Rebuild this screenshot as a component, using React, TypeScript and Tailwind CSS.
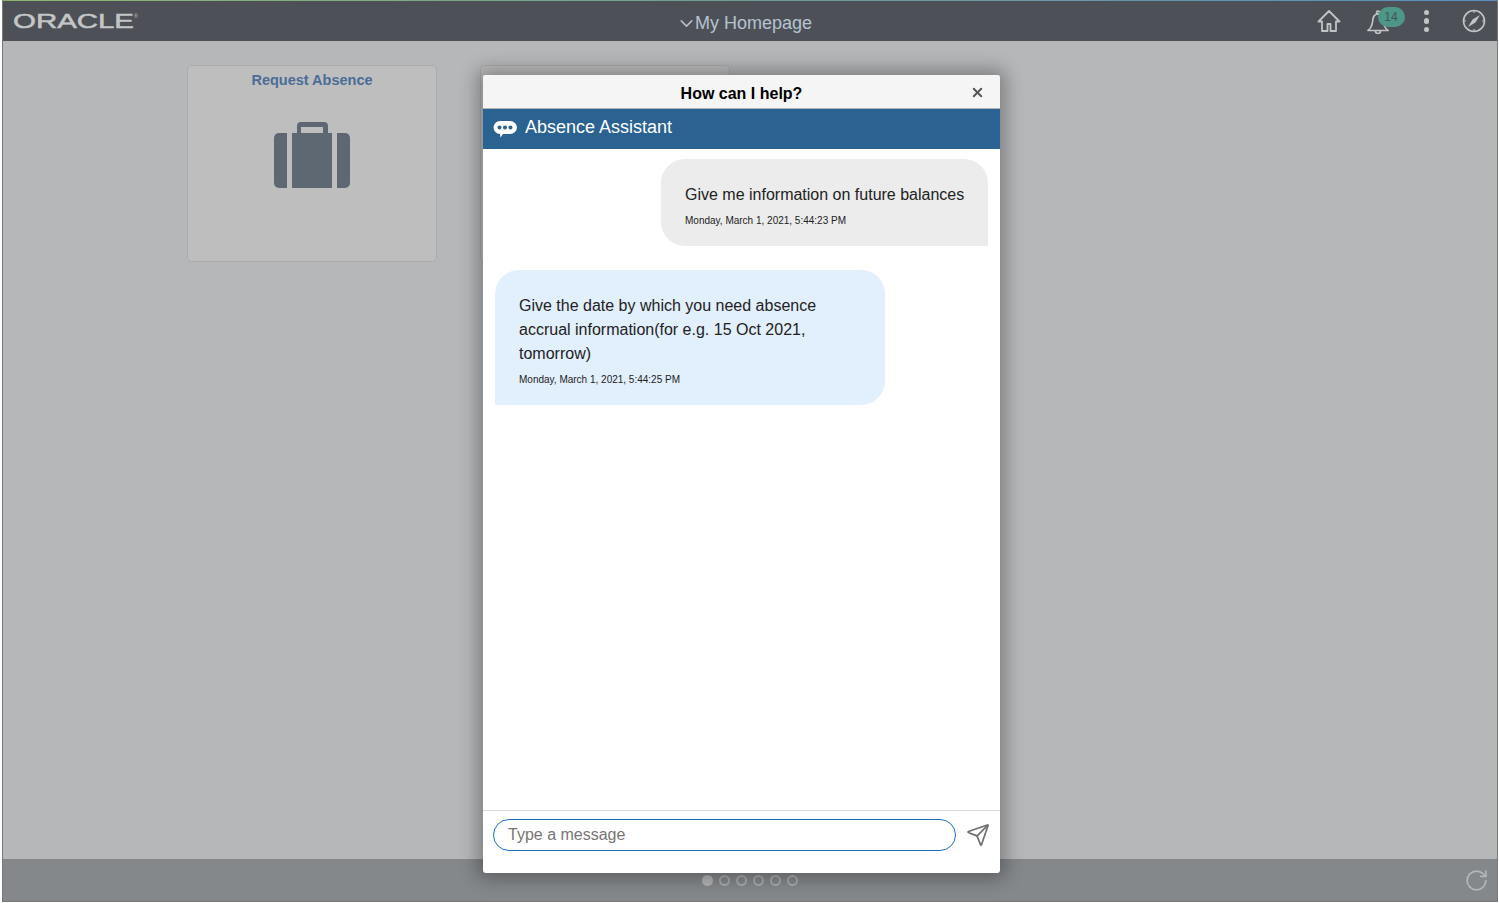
import { ChevronDown, X, Send, RotateCw } from 'lucide-react';

const FONT = "font-['Liberation_Sans',Arial,sans-serif]";

function Tile({ title }: { title?: string }) {
  return (
    <div className="w-[250px] h-[197px] shrink-0 rounded-[5px] border border-[#a9abae] bg-[#bebebe] flex flex-col items-center">
      {title && (
        <>
          <div className="mt-[4px] text-[14.5px] leading-[20px] font-bold text-[#4a6d98]">{title}</div>
          <svg width="76" height="66" viewBox="0 0 76 66" className="mt-[32px]">
            <path d="M23 11V4a4 4 0 0 1 4-4h23a4 4 0 0 1 4 4v7h-5V5H27v6z" fill="#5e6872" />
            <path d="M5 11h8v55H5a5 5 0 0 1-5-5V16a5 5 0 0 1 5-5z" fill="#5e6872" />
            <rect x="18" y="11" width="40" height="55" fill="#5e6872" />
            <path d="M63 11h8a5 5 0 0 1 5 5v45a5 5 0 0 1-5 5h-8z" fill="#5e6872" />
          </svg>
        </>
      )}
    </div>
  );
}

function HomeIcon() {
  return (
    <svg width="24" height="24" viewBox="0 0 24 24" fill="none" stroke="#c2c3c4" strokeWidth="1.8" strokeLinejoin="round">
      <path d="M12 2 1.500 12.500H5V22h5.500v-7h3v7H19v-9.500h3.500z" />
    </svg>
  );
}

function BellIcon() {
  return (
    <svg width="22" height="24" viewBox="0 0 22 24" fill="none" stroke="#c2c3c4" strokeWidth="1.7">
      <circle cx="11" cy="2.500" r="1.500" />
      <path d="M11 4C6.500 4 6 8 5.500 12 5 16 3.500 18.500 1 20.500h20c-2.500-2-4-4.500-4.500-8.500S15.500 4 11 4z" strokeLinejoin="round" />
      <path d="M8.500 21a2.500 2.500 0 0 0 5 0" />
    </svg>
  );
}

function CompassIcon() {
  return (
    <svg width="24" height="24" viewBox="0 0 24 24" fill="none" stroke="#c2c3c4" strokeWidth="1.6">
      <circle cx="12" cy="12" r="10.500" />
      <path d="M12 1.500v2.500M12 20v2.500M1.500 12H4M20 12h2.500" strokeWidth="1.200" />
      <path d="M18 6 13.500 13.500 6 18 10.500 10.500z" fill="#c2c3c4" stroke="none" />
    </svg>
  );
}

function Bubble({ text, time, side }: { text: string[]; time: string; side: 'me' | 'bot' }) {
  const me = side === 'me';
  return (
    <div
      className={
        me
          ? 'self-end w-[327px] h-[87px] mr-[12px] pl-[24px] pt-[24px] bg-[#ececec] rounded-tl-[24px] rounded-tr-[24px] rounded-bl-[24px]'
          : 'self-start w-[390px] h-[135px] ml-[12px] mt-[24px] pl-[24px] pt-[24px] bg-[#e2effd] rounded-tl-[24px] rounded-tr-[24px] rounded-br-[24px]'
      }
    >
      <div className="text-[16px] leading-[24px] text-[#222]">
        {text.map((t) => (
          <div key={t}>{t}</div>
        ))}
      </div>
      <div className="mt-[7px] text-[10px] leading-[14px] text-[#222]">{time}</div>
    </div>
  );
}

export default function App() {
  return (
    <div className={`relative h-[903px] w-[1499px] overflow-hidden bg-white pl-[2px] pr-px ${FONT}`}>
      <div className="h-[902px] flex flex-col border-l border-r border-b border-[#77797b]">
        {/* top bar */}
        <div className="h-px bg-gradient-to-r from-[#8db56f] via-[#6f9d94] to-[#5b8fc0]" />
        <header className="h-[40px] shrink-0 bg-[#4d5157] flex items-center relative">
          <svg width="130" height="24" viewBox="0 0 130 24" className="ml-[9px] mt-[2px]">
            <text
              x="1"
              y="18"
              textLength="121"
              lengthAdjust="spacingAndGlyphs"
              fontFamily="'Liberation Sans', Arial, sans-serif"
              fontSize="21"
              fill="#c4c5c6"
              stroke="#c4c5c6"
              strokeWidth="0.5"
            >
              ORACLE
            </text>
            <text x="122" y="8" fontFamily="'Liberation Sans', Arial, sans-serif" fontSize="5" fill="#c4c5c6">
              ®
            </text>
          </svg>
          <div className="absolute left-[673px] top-[9px] flex items-center">
            <ChevronDown size={21} strokeWidth={1.8} className="text-[#b9bcc0]" />
            <span className="ml-[-2px] text-[18px] leading-[26px] text-[#b5c3d1]">My Homepage</span>
          </div>
          <div className="ml-auto flex items-center">
            <HomeIcon />
            <div className="relative ml-[26px] mt-[1px]">
              <BellIcon />
              <span className="absolute left-[11px] top-[-3px] h-[20px] w-[27px] rounded-full bg-[#4e9685] text-center text-[12px] leading-[20px] text-[#3f5560]">
                14
              </span>
            </div>
            <div className="ml-[35px] flex flex-col gap-[3px]">
              <span className="size-[5.500px] rounded-full bg-[#c2c3c4]" />
              <span className="size-[5.500px] rounded-full bg-[#c2c3c4]" />
              <span className="size-[5.500px] rounded-full bg-[#c2c3c4]" />
            </div>
            <div className="ml-[33px] mr-[11px]">
              <CompassIcon />
            </div>
          </div>
        </header>

        {/* homepage tiles */}
        <main className="flex-1 bg-[#b6b7b9] pt-[24px] pl-[184px]">
          <div className="flex gap-[43px]">
            <Tile title="Request Absence" />
            <Tile />
          </div>
        </main>

        {/* footer with page dots */}
        <footer className="h-[42px] shrink-0 bg-[#85888b] flex items-center relative">
          <div className="absolute left-[699px] top-[16px] flex gap-[6px]">
            <span className="size-[11px] rounded-full bg-[#b4b5b7]" />
            {[0, 1, 2, 3, 4].map((i) => (
              <span key={i} className="size-[11px] rounded-full border-2 border-[#a9abad]" />
            ))}
          </div>
          <RotateCw size={25} strokeWidth={1.6} className="ml-auto mr-[8px] mt-[1px] text-[#b4b6b7]" />
        </footer>
      </div>

      {/* assistant dialog */}
      <div className="absolute left-[483px] top-[75px] w-[517px] h-[798px] rounded-[3px] bg-white flex flex-col overflow-hidden shadow-[0_0_18px_6px_rgba(0,0,0,0.3)]">
        <div className="h-[34px] shrink-0 bg-[#f5f5f5] border-b border-[#b5b5b5] flex items-center justify-center relative">
          <span className="mt-[5px] text-[16px] font-bold text-black">How can I help?</span>
          <X size={15} strokeWidth={3} className="absolute right-[15px] top-[10px] text-[#555]" />
        </div>
        <div className="h-[40px] shrink-0 bg-[#2a6291] flex items-center pl-[10px]">
          <svg width="24" height="17" viewBox="0 0 24 17">
            <path
              d="M7 0h10a7 6.500 0 0 1 0 13h-7l-2.500 3.500L7 13a6.500 6.500 0 0 1 0-13z"
              fill="#fff"
            />
            <circle cx="6.500" cy="6.500" r="2" fill="#2a6291" />
            <circle cx="12" cy="6.500" r="2" fill="#2a6291" />
            <circle cx="17.500" cy="6.500" r="2" fill="#2a6291" />
          </svg>
          <span className="ml-[8px] text-[18px] leading-[24px] mb-[4px] text-white">Absence Assistant</span>
        </div>
        <div className="flex-1 flex flex-col pt-[10px]">
          <Bubble side="me" text={['Give me information on future balances']} time="Monday, March 1, 2021, 5:44:23 PM" />
          <Bubble
            side="bot"
            text={['Give the date by which you need absence', 'accrual information(for e.g. 15 Oct 2021,', 'tomorrow)']}
            time="Monday, March 1, 2021, 5:44:25 PM"
          />
        </div>
        <div className="h-[63px] shrink-0 border-t border-[#d9d9d9] pt-[8px] pl-[10px] flex items-start">
          <div className="w-[463px] h-[32px] rounded-full border border-[#1b6ec2] pl-[14px] text-[16px] leading-[30px] text-[#757575]">
            Type a message
          </div>
          <Send size={24} strokeWidth={1.7} className="ml-[10px] mt-[4px] text-[#6f6f6f]" />
        </div>
      </div>
    </div>
  );
}
